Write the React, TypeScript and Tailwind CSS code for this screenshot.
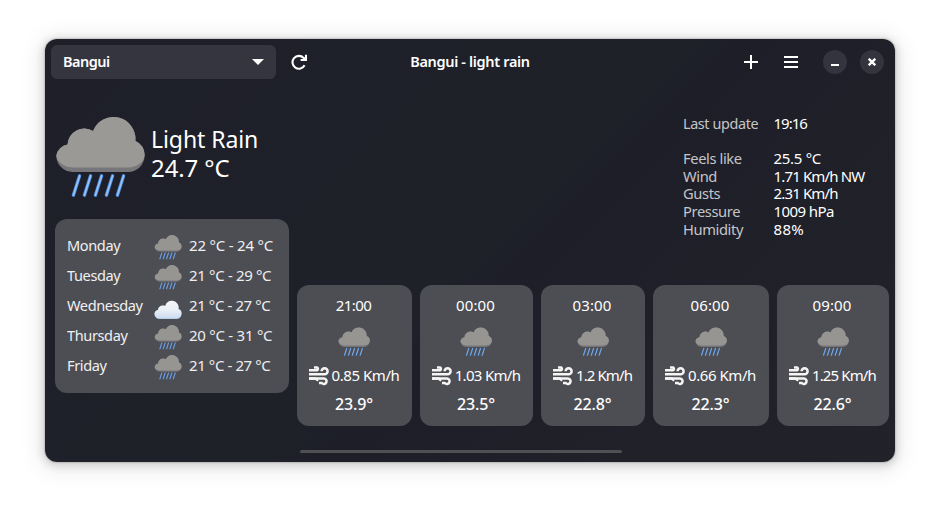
import React from "react";

type Sky = "rain" | "cloud";

const drops = "M24.600 58.800L18.400 78.200M35.600 58.800L29.400 78.200M46.600 58.800L40.400 78.200M57.600 58.800L51.400 78.200M68.600 58.800L62.400 78.200";

function Weather({ kind, className }: { kind: Sky; className: string }) {
  if (kind === "cloud") {
    return (
      <svg viewBox="0 0 90 82" className={className}>
        <defs>
          <linearGradient id="whiteCloud" x1="0" y1="0" x2="0" y2="1">
            <stop offset="0" stopColor="#ffffff" />
            <stop offset="0.5" stopColor="#f4f9ff" />
            <stop offset="1" stopColor="#d3e5fa" />
          </linearGradient>
        </defs>
        <g transform="translate(0 4)">
          <path d="M18 75A16 16 0 0 1 1 59A14 14 0 0 1 12 45A17 17 0 0 1 36 32A21 21 0 0 1 79 42A15 15 0 0 1 89 58A16 16 0 0 1 73 75Z" fill="#b4cdec" />
          <path d="M18 72A15 14 0 0 1 1 59A14 14 0 0 1 12 45A17 17 0 0 1 36 32A21 21 0 0 1 79 42A15 15 0 0 1 89 58A15 14 0 0 1 73 72Z" fill="url(#whiteCloud)" />
        </g>
      </svg>
    );
  }
  return (
    <svg viewBox="0 0 90 82" className={className}>
      <path d="M17.500 55A16.500 16.500 0 0 1 1.300 38.500A13.500 13.500 0 0 1 12.500 27.500A16.800 16.800 0 0 1 38 14A22 22 0 0 1 80.400 24A14.500 14.500 0 0 1 89.600 38.500A16.500 16.500 0 0 1 73 55Z" fill="#77767b" />
      <path d="M17.500 50.500A17 13 0 0 1 1.300 38.500A13.500 13.500 0 0 1 12.500 27.500A16.800 16.800 0 0 1 38 14A22 22 0 0 1 80.400 24A14.500 14.500 0 0 1 89.600 38.500A17 13 0 0 1 73 50.500Z" fill="#9a9996" />
      <g strokeLinecap="round" fill="none">
        <path d={drops} stroke="#4a8fe3" strokeWidth="3.400" />
        <path d={drops} stroke="#99c1f1" strokeWidth="1.700" />
      </g>
    </svg>
  );
}

function Wind() {
  return (
    <svg viewBox="0 0 20 20" className="h-5 w-5 shrink-0" fill="none" stroke="#f6f5f4" strokeWidth="2.500">
      <path d="M0 4.300H8A1.500 1.500 0 0 0 8 1.500H5" />
      <path d="M0 8.300H15.600A3 3 0 1 0 12.600 5.300" />
      <path d="M0 12.600H14.500A2.700 2.700 0 1 1 12.800 17H10" />
      <path d="M0 12.600H6.500A1.800 1.800 0 0 1 8 15" />
    </svg>
  );
}

const details = [
  { label: "Feels like", value: "25.5 °C", track: "tracking-[-0.3px]" },
  { label: "Wind", value: "1.71 Km/h NW", track: "tracking-[-0.850px]" },
  { label: "Gusts", value: "2.31 Km/h", track: "tracking-[-0.850px]" },
  { label: "Pressure", value: "1009 hPa", track: "tracking-[-0.580px]" },
  { label: "Humidity", value: "88%", track: "tracking-[0.3px]" },
];

const days: { name: string; sky: Sky; range: string; track: string }[] = [
  { name: "Monday", sky: "rain", range: "22 °C - 24 °C", track: "tracking-[-0.190px]" },
  { name: "Tuesday", sky: "rain", range: "21 °C - 29 °C", track: "tracking-[-0.330px]" },
  { name: "Wednesday", sky: "cloud", range: "21 °C - 27 °C", track: "tracking-[-0.400px]" },
  { name: "Thursday", sky: "rain", range: "20 °C - 31 °C", track: "tracking-[-0.250px]" },
  { name: "Friday", sky: "rain", range: "21 °C - 27 °C", track: "tracking-[-0.400px]" },
];

const hours = [
  { time: "21:00", wind: "0.85", temp: "23.9°", width: "w-[115px]", timeTrack: "tracking-[-0.6px]", windTrack: "tracking-[-0.450px]" },
  { time: "00:00", wind: "1.03", temp: "23.5°", width: "w-[113px]", timeTrack: "tracking-[0.1px]", windTrack: "tracking-[-0.680px]" },
  { time: "03:00", wind: "1.2", temp: "22.8°", width: "w-[104px]", timeTrack: "tracking-[0.1px]", windTrack: "tracking-[-0.900px]" },
  { time: "06:00", wind: "0.66", temp: "22.3°", width: "w-[116px]", timeTrack: "tracking-[0.1px]", windTrack: "tracking-[-0.450px]" },
  { time: "09:00", wind: "1.25", temp: "22.6°", width: "w-[112px]", timeTrack: "tracking-[0.1px]", windTrack: "tracking-[-0.880px]" },
];

export default function App() {
  return (
    <div className="h-[513px] w-[940px] overflow-hidden bg-white pl-[45px] pt-[39px] font-['Noto_Sans',sans-serif] text-[15px] tracking-[-0.4px] text-white">
      <div className="flex h-[423px] w-[850px] flex-col overflow-hidden rounded-xl bg-[linear-gradient(135deg,#1e1f29,#1f2129_50%,#1d1e28_55%,#222329)] shadow-[0_0_2px_rgba(0,0,0,0.4),0_2px_8px_2px_rgba(0,0,0,0.14),0_3px_22px_6px_rgba(0,0,0,0.08)]">
        <header className="flex h-[46px] shrink-0 items-center pl-1.5 text-[14.500px] font-semibold tracking-[-0.3px]">
          <div className="flex h-[34px] w-[225px] items-center justify-between rounded-md bg-[#34353e] pl-3 pr-3">
            <span className="tracking-[-0.5px]">Bangui</span>
            <svg viewBox="0 0 12 6" className="h-1.5 w-3" fill="white"><path d="M0 0H12L6 6Z" /></svg>
          </div>
          <svg viewBox="0 0 16 16" className="ml-[15px] h-4 w-4" fill="none" stroke="white" strokeWidth="2.100">
            <path d="M13.600 11.200A6.400 6.400 0 1 1 12.600 3.900L14.500 5.300M15 0.700V6H9.600" />
          </svg>
          <span className="ml-[103px] w-[120px] text-center tracking-[-0.340px] whitespace-nowrap">Bangui - light rain</span>
          <svg viewBox="0 0 14 14" className="ml-[214px] h-3.5 w-3.5" stroke="white" strokeWidth="2"><path d="M7 0V14M0 7H14" /></svg>
          <svg viewBox="0 0 14 12" className="ml-[26px] h-3 w-3.5" stroke="white" strokeWidth="2"><path d="M0 1H14M0 6H14M0 11H14" /></svg>
          <div className="ml-[25px] flex h-6 w-6 items-center justify-center rounded-full bg-[#33343d]">
            <div className="mt-[5px] h-0.5 w-2 bg-white" />
          </div>
          <div className="ml-[13px] flex h-6 w-6 items-center justify-center rounded-full bg-[#33343d]">
            <svg viewBox="0 0 8 8" className="h-2 w-2" stroke="white" strokeWidth="2.300"><path d="M0.700 0.700L7.300 7.300M7.300 0.700L0.700 7.300" /></svg>
          </div>
        </header>

        <div className="flex min-h-0 flex-1">
          <section className="w-[252px] shrink-0 pl-2.5">
            <div className="flex h-[134px] pt-8">
              <Weather kind="rain" className="h-[82px] w-[90px]" />
              <div className="ml-1.5 mt-[7px] text-2xl leading-[29px] tracking-[-0.1px] whitespace-nowrap">
                <div className="origin-left scale-x-[0.96]">Light Rain</div>
                <div>24.7 °C</div>
              </div>
            </div>
            <div className="h-[174px] w-[234px] rounded-xl bg-[#4d4e54] pl-3 pt-3 text-[#f0f0f1]">
              {days.map((d) => (
                <div key={d.name} className="flex h-[30px] items-center whitespace-nowrap">
                  <span className="w-[88px] shrink-0 origin-left scale-x-[0.97] pb-px">{d.name}</span>
                  <Weather kind={d.sky} className="-ml-px mt-0.5 h-[25px] w-7 shrink-0 opacity-95" />
                  <span className={"ml-[7px] pb-px " + d.track}>{d.range}</span>
                </div>
              ))}
            </div>
          </section>

          <section className="flex min-w-0 flex-1 flex-col">
            <div className="ml-[386px] h-[200px] pt-[30px] leading-[17.600px] whitespace-nowrap">
              <div className="mb-[17.600px] flex">
                <span className="w-[90.500px] origin-left scale-x-[0.96] text-[#c5c5c8]">Last update</span>
                <span className="tracking-[-1px]">19:16</span>
              </div>
              {details.map((d) => (
                <div key={d.label} className="flex">
                  <span className="w-[90.500px] origin-left scale-x-[0.98] text-[#c5c5c8]">{d.label}</span>
                  <span className={d.track}>{d.value}</span>
                </div>
              ))}
            </div>
            <div className="flex gap-2">
              {hours.map((h) => (
                <div key={h.time} className={"flex h-[141px] shrink-0 flex-col items-center rounded-xl bg-[#4d4e54] " + h.width}>
                  <span className={"mt-2.5 mr-0.5 h-5 leading-5 " + h.timeTrack}>{h.time}</span>
                  <Weather kind="rain" className="mt-3 mr-px h-[30px] w-8 opacity-95" />
                  <div className="mt-[9px] mr-px flex h-5 items-center gap-[3px] whitespace-nowrap">
                    <Wind />
                    <span className={"pb-px " + h.windTrack}>{h.wind} Km/h</span>
                  </div>
                  <span className="mt-2 mr-px h-5 text-base leading-5 font-medium tracking-[-0.1px]">{h.temp}</span>
                </div>
              ))}
            </div>
            <div className="ml-[3px] mt-6 h-[3px] w-[322px] rounded-full bg-[#4f5054]" />
          </section>
        </div>
      </div>
    </div>
  );
}
